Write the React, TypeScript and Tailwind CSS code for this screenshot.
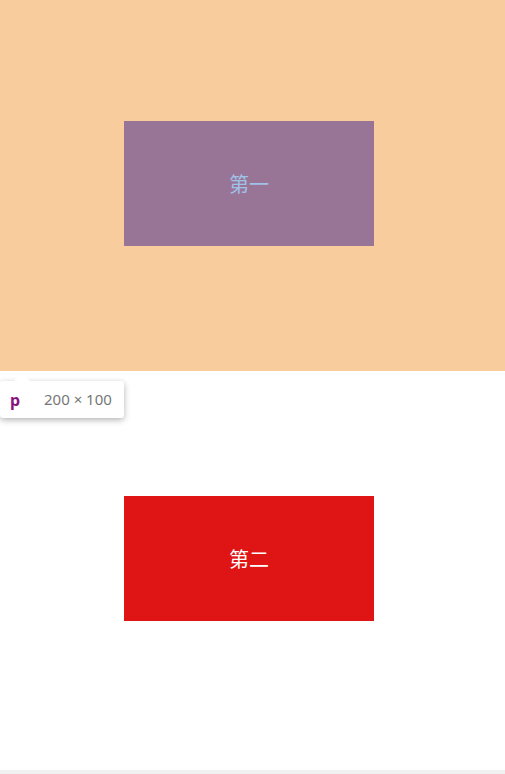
export default function App() {
  return (
    <div className="relative w-[505px] h-[774px] bg-white overflow-hidden" style={{ fontFamily: '"Noto Sans", "Noto Sans CJK SC", sans-serif' }}>
      <div className="bg-[#f8cc9c] pt-[121px] pb-[125px] pl-[124px]">
        <div className="w-[250px] h-[125px] bg-[#987597] flex items-center justify-center text-[20px] text-[#a0c2e6]" style={{ fontFamily: '"Noto Sans CJK SC", sans-serif' }}>
          第一
        </div>
      </div>
      <div className="pt-[125px] pl-[124px]">
        <div className="w-[250px] h-[125px] bg-[#df1515] flex items-center justify-center text-[20px] text-white" style={{ fontFamily: '"Noto Sans CJK SC", sans-serif' }}>
          第二
        </div>
      </div>
      <div className="absolute left-0 bottom-0 w-[505px] h-[4px] bg-[#f1f1f1]" />

      {/* inspect tooltip */}
      <div className="absolute left-0 top-[381px] w-[124px] h-[37px] bg-white rounded-[3px] shadow-[0_2px_6px_rgba(0,0,0,0.3)] flex items-center pl-[10px]">
        <span className="text-[16px] font-bold text-[#881280] w-[34px]">p</span>
        <span className="text-[15px] text-[#777]">200 × 100</span>
        <div className="absolute -top-[8px] left-[14px] w-0 h-0 border-l-[8px] border-r-[8px] border-b-[8px] border-l-transparent border-r-transparent border-b-white" />
      </div>
    </div>
  );
}
